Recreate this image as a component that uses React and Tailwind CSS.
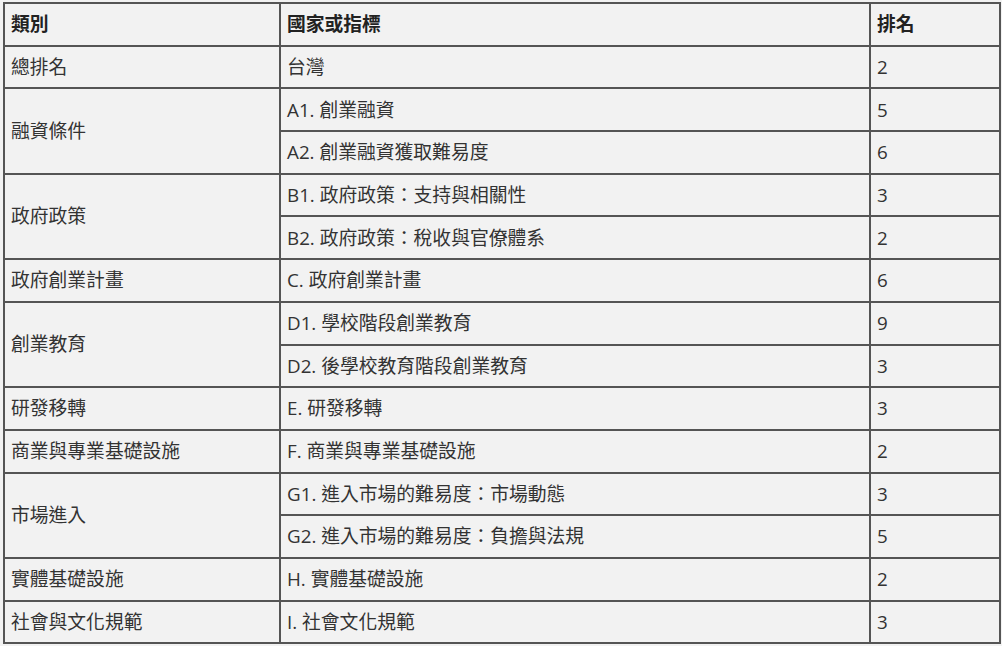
import React from 'react';

const rows = [
    { cat: '總排名', span: 1, items: [['台灣', '2']] },
    { cat: '融資條件', span: 2, items: [['A1. 創業融資', '5'], ['A2. 創業融資獲取難易度', '6']] },
    { cat: '政府政策', span: 2, items: [['B1. 政府政策：支持與相關性', '3'], ['B2. 政府政策：稅收與官僚體系', '2']] },
    { cat: '政府創業計畫', span: 1, items: [['C. 政府創業計畫', '6']] },
    { cat: '創業教育', span: 2, items: [['D1. 學校階段創業教育', '9'], ['D2. 後學校教育階段創業教育', '3']] },
    { cat: '研發移轉', span: 1, items: [['E. 研發移轉', '3']] },
    { cat: '商業與專業基礎設施', span: 1, items: [['F. 商業與專業基礎設施', '2']] },
    { cat: '市場進入', span: 2, items: [['G1. 進入市場的難易度：市場動態', '3'], ['G2. 進入市場的難易度：負擔與法規', '5']] },
    { cat: '實體基礎設施', span: 1, items: [['H. 實體基礎設施', '2']] },
    { cat: '社會與文化規範', span: 1, items: [['I. 社會文化規範', '3']] },
];

const cell = 'border-2 border-[#555] px-[6px] h-[42.7px] align-middle';

export default function App() {
    return (
        <div
            className="min-h-screen bg-[#f2f2f2] pt-[2px] pl-[3px] text-[#333] text-[18.8px] leading-[1.4]"
            style={{ fontFamily: '"Open Sans", "Noto Sans CJK TC", sans-serif' }}
        >
            <table className="w-[998px] border-collapse">
                <thead>
                    <tr className="font-bold text-[#222]">
                        <th className={`${cell} w-[276px] text-left`}>類別</th>
                        <th className={`${cell} w-[590px] text-left`}>國家或指標</th>
                        <th className={`${cell} text-left`}>排名</th>
                    </tr>
                </thead>
                <tbody>
                    {rows.map((r) =>
                        r.items.map(([name, rank], i) => (
                            <tr key={name}>
                                {i === 0 && (
                                    <td className={cell} rowSpan={r.span}>
                                        {r.cat}
                                    </td>
                                )}
                                <td className={cell}>{name}</td>
                                <td className={cell}>{rank}</td>
                            </tr>
                        ))
                    )}
                </tbody>
            </table>
        </div>
    );
}
